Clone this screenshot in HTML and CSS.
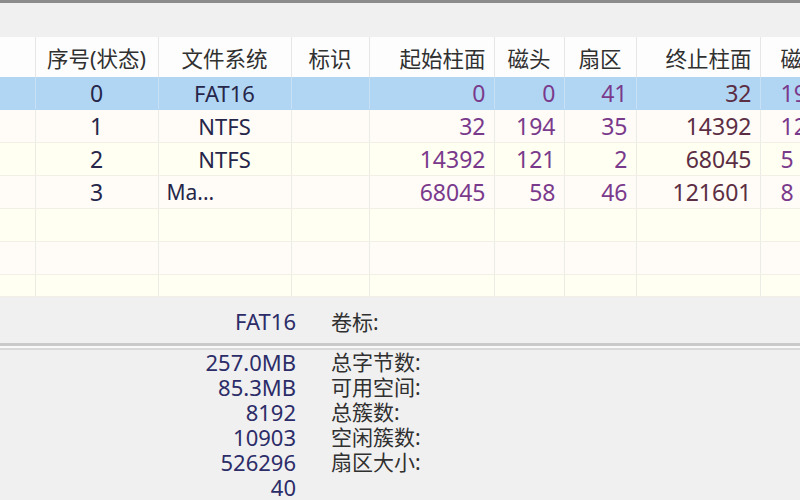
FILE: index.html
```html
<!DOCTYPE html>
<html lang="zh">
<head>
<meta charset="utf-8">
<link rel="stylesheet" href="styles.css">
</head>
<body>
<div class="app">
  <div class="topbar"></div>
  <div class="grid-wrap">
    <table class="grid">
      <colgroup>
        <col class="c0"><col class="c1"><col class="c2"><col class="c3"><col class="c4"><col class="c5"><col class="c6"><col class="c7"><col class="c8">
      </colgroup>
      <thead>
        <tr>
          <th></th><th>序号(状态)</th><th>文件系统</th><th>标识</th><th class="r">起始柱面</th><th>磁头</th><th>扇区</th><th class="r">终止柱面</th><th class="l">磁头</th>
        </tr>
      </thead>
      <tbody>
        <tr class="sel"><td></td><td class="idx">0</td><td class="fs">FAT16</td><td></td><td class="num">0</td><td class="num">0</td><td class="num">41</td><td class="num end">32</td><td class="num l">197</td></tr>
        <tr class="a"><td></td><td class="idx">1</td><td class="fs">NTFS</td><td></td><td class="num">32</td><td class="num">194</td><td class="num">35</td><td class="num end">14392</td><td class="num l">12</td></tr>
        <tr class="b"><td></td><td class="idx">2</td><td class="fs">NTFS</td><td></td><td class="num">14392</td><td class="num">121</td><td class="num">2</td><td class="num end">68045</td><td class="num l">5</td></tr>
        <tr class="a"><td></td><td class="idx">3</td><td class="fs left">Ma...</td><td></td><td class="num">68045</td><td class="num">58</td><td class="num">46</td><td class="num end">121601</td><td class="num l">8</td></tr>
        <tr class="b"><td></td><td></td><td></td><td></td><td></td><td></td><td></td><td></td><td></td></tr>
        <tr class="a"><td></td><td></td><td></td><td></td><td></td><td></td><td></td><td></td><td></td></tr>
        <tr class="b short"><td></td><td></td><td></td><td></td><td></td><td></td><td></td><td></td><td></td></tr>
      </tbody>
    </table>
  </div>
  <div class="info">
    <div class="info-head">
      <span class="val">FAT16</span><span class="lab">卷标:</span>
    </div>
    <div class="sep"></div>
    <div class="info-body">
      <div class="vals">
        <span>257.0MB</span><span>85.3MB</span><span>8192</span><span>10903</span><span>526296</span><span>40</span>
      </div>
      <div class="labs">
        <span>总字节数:</span><span>可用空间:</span><span>总簇数:</span><span>空闲簇数:</span><span>扇区大小:</span>
      </div>
    </div>
  </div>
</div>
</body>
</html>
```

FILE: styles.css
```css
html, body {
  margin: 0;
  padding: 0;
  background: #f0f0f0;
}
body {
  font-family: "Noto Sans", "Noto Sans CJK SC", sans-serif;
  width: 800px;
  height: 500px;
  overflow: hidden;
}
.app {
  width: 800px;
  height: 500px;
  overflow: hidden;
  display: flex;
  flex-direction: column;
}
.topbar {
  height: 34px;
  border-top: 3px solid #8c8c8c;
  background: #f0f0f0;
  flex: none;
}
.grid-wrap {
  height: 260px;
  overflow: hidden;
  flex: none;
}
.grid {
  border-collapse: collapse;
  table-layout: fixed;
  width: 840px;
}
.c0 { width: 35px; }
.c1 { width: 123px; }
.c2 { width: 133px; }
.c3 { width: 78px; }
.c4 { width: 125px; }
.c5 { width: 70px; }
.c6 { width: 72px; }
.c7 { width: 124px; }
.c8 { width: 80px; }
.grid th {
  height: 40px;
  padding: 0 8px;
  font-size: 21.5px;
  font-weight: normal;
  color: #303030;
  background: #fdfdfd;
  border-right: 1px solid #e6e6e6;
  text-align: center;
  white-space: nowrap;
  overflow: hidden;
}
.grid th.r { text-align: right; }
.grid th.l, .grid td.l { text-align: left; padding-left: 20px; }
.grid td {
  height: 32px;
  padding: 0 8px;
  font-size: 23px;
  line-height: 28px;
  border-right: 1px solid #ecece6;
  border-bottom: 1px solid #f1efe6;
  white-space: nowrap;
  overflow: hidden;
  color: #2a2a4a;
}
.grid tr.short td { height: 21px; }
.grid tr.a td { background: #fffbf6; }
.grid tr.b td { background: #fffff2; }
.grid tr.sel td { background: #b1d6f4; border-bottom-color: #b1d6f4; border-right-color: #c8e0f4; }
.grid td.idx, .grid td.fs { text-align: center; color: #26264a; }
.grid td.fs { font-size: 22px; }
.grid td.fs.left { text-align: left; font-size: 21px; }
.grid td.num { text-align: right; color: #7a3a8c; }
.grid td.num.end { color: #5c2e44; }
.grid td.num.l { text-align: left; }
.info {
  flex: 1;
  background: #f0f0f0;
}
.info-head {
  height: 44px;
  display: flex;
  align-items: center;
  padding-top: 2px;
}
.val, .vals span {
  color: #2c2c68;
  font-size: 22px;
}
.info-head .val {
  width: 296px;
  text-align: right;
}
.info-head .lab, .labs span {
  color: #303030;
  font-size: 21px;
}
.info-head .lab { margin-left: 35px; }
.sep {
  height: 2px;
  border-top: 3px solid #cacaca;
  border-bottom: 2px solid #dadada;
  background: #fafafa;
}
.info-body {
  display: flex;
}
.vals, .labs {
  display: flex;
  flex-direction: column;
  line-height: 25px;
}
.vals {
  width: 296px;
  text-align: right;
}
.labs {
  margin-left: 35px;
}
```
